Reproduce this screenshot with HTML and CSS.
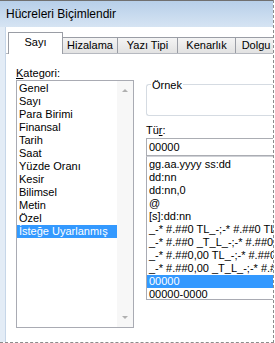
FILE: index.html
```html
<!DOCTYPE html>
<html lang="tr">
<head>
    <meta charset="UTF-8">
    <title>Hücreleri Biçimlendir</title>
    <link rel="stylesheet" href="styles.css">
</head>
<body>
    <div class="dlg">
        <div class="title">Hücreleri Biçimlendir</div>
        <div class="frame">
            <div class="client">
                <div class="tabs">
                    <div class="tab on t1">Sayı</div>
                    <div class="tab t2">Hizalama</div>
                    <div class="tab t3">Yazı Tipi</div>
                    <div class="tab t4">Kenarlık</div>
                    <div class="tab t5">Dolgu</div>
                </div>
                <div class="panel">
                    <div class="left">
                        <div class="lbl"><u>K</u>ategori:</div>
                        <div class="catlist">
                            <div class="items">
                                <div>Genel</div>
                                <div>Sayı</div>
                                <div>Para Birimi</div>
                                <div>Finansal</div>
                                <div>Tarih</div>
                                <div>Saat</div>
                                <div>Yüzde Oranı</div>
                                <div>Kesir</div>
                                <div>Bilimsel</div>
                                <div>Metin</div>
                                <div>Özel</div>
                                <div class="sel">İsteğe Uyarlanmış</div>
                            </div>
                            <div class="sbar">
                                <span class="arr up"></span>
                                <span class="arr down"></span>
                            </div>
                        </div>
                    </div>
                    <div class="right">
                        <div class="group"><span class="glbl">Örnek</span></div>
                        <div class="lbl tur">Tü<u>r</u>:</div>
                        <div class="inp">00000</div>
                        <div class="fmtlist">
                            <div>gg.aa.yyyy ss:dd</div>
                            <div>dd:nn</div>
                            <div>dd:nn,0</div>
                            <div>@</div>
                            <div>[s]:dd:nn</div>
                            <div>_-* #.##0 TL_-;-* #.##0 TL_-;_-* "-" TL_-;_-@_-</div>
                            <div>_-* #.##0 _T_L_-;-* #.##0 _T_L_-;_-* "-" _T_L_-;_-@_-</div>
                            <div>_-* #.##0,00 TL_-;-* #.##0,00 TL_-;_-* "-"?? TL_-;_-@_-</div>
                            <div>_-* #.##0,00 _T_L_-;-* #.##0,00 _T_L_-;_-* "-"?? _T_L_-;_-@_-</div>
                            <div class="sel">00000</div>
                            <div>00000-0000</div>
                        </div>
                    </div>
                </div>
            </div>
        </div>
    </div>
</body>
</html>
```
FILE: styles.css
```css
body {
    margin: 0;
    font-family: "Liberation Sans", Arial, sans-serif;
    font-size: 11px;
    color: #000;
    background: #fff;
}

.dlg {
    width: 273px;
    height: 342px;
    border-right: 1px dashed #8c8c8c;
    border-bottom: 1px dashed #8c8c8c;
    overflow: hidden;
    display: flex;
    flex-direction: column;
}

.title {
    height: 26px;
    border-top: 1px solid #707070;
    background: linear-gradient(#b7cfe9, #d6e4f3);
    padding-left: 6px;
    line-height: 27px;
    font-size: 12px;
    white-space: nowrap;
}

.frame {
    flex: 1;
    background: #e3ecf6;
    padding-left: 5px;
}

.client {
    height: 100%;
    background: #fff;
    border-left: 1px solid #c6d6e8;
}

/* sekmeler */
.tabs {
    display: flex;
    align-items: flex-end;
    height: 26px;
    padding-left: 2px;
    border-bottom: 1px solid #b6b9c0;
    white-space: nowrap;
}

.tab {
    height: 15px;
    line-height: 15px;
    border: 1px solid #9a9da5;
    border-bottom: none;
    margin-right: -1px;
    background: linear-gradient(#f4f4f4, #e2e2e2);
    text-align: center;
    flex: none;
}

.tab.on {
    height: 21px;
    line-height: 19px;
    background: #fff;
    margin-bottom: -1px;
    position: relative;
    z-index: 1;
}

.t1 { width: 53px; }
.t2 { width: 54px; }
.t3 { width: 59px; }
.t4 { width: 57px; }
.t5 { width: 40px; }

.panel {
    display: flex;
    padding: 13px 0 0 10px;
}

.lbl {
    height: 13px;
    line-height: 13px;
    white-space: nowrap;
}

/* kategori listesi */
.catlist {
    width: 116px;
    height: 246px;
    border: 1px solid #a9abb3;
    display: flex;
}

.items {
    flex: 1;
    padding-top: 1px;
    line-height: 13px;
    white-space: nowrap;
    overflow: hidden;
}

.items div {
    padding-left: 2px;
}

.sel {
    background: #3399ff;
    color: #fff;
}

.sbar {
    width: 16px;
    background: #f7f7f7;
    display: flex;
    flex-direction: column;
    justify-content: space-between;
    align-items: center;
    padding: 8px 0;
}

.arr {
    width: 0;
    height: 0;
    border-left: 3px solid transparent;
    border-right: 3px solid transparent;
}

.arr.up {
    border-bottom: 3px solid #b0b0b0;
}

.arr.down {
    border-top: 3px solid #b0b0b0;
}

/* sag taraf */
.right {
    margin-left: 12px;
    width: 140px;
}

.group {
    margin-top: 17px;
    height: 30px;
    border: 1px solid #d5dbe2;
    border-right: none;
    border-radius: 3px 0 0 3px;
    position: relative;
}

.glbl {
    position: absolute;
    left: 4px;
    top: -6px;
    background: #fff;
    padding: 0 1px;
    line-height: 12px;
}

.tur {
    margin-top: 8px;
    margin-bottom: 1px;
}

.inp {
    height: 16px;
    line-height: 16px;
    border: 1px solid #abadb3;
    border-right: none;
    padding-left: 2px;
}

.fmtlist {
    height: 144px;
    border: 1px solid #a9abb3;
    border-right: none;
    border-top-color: #cfd1d6;
    padding-top: 1px;
    box-sizing: border-box;
    line-height: 13px;
    white-space: nowrap;
    overflow: hidden;
}

.fmtlist div {
    padding-left: 2px;
}
```
